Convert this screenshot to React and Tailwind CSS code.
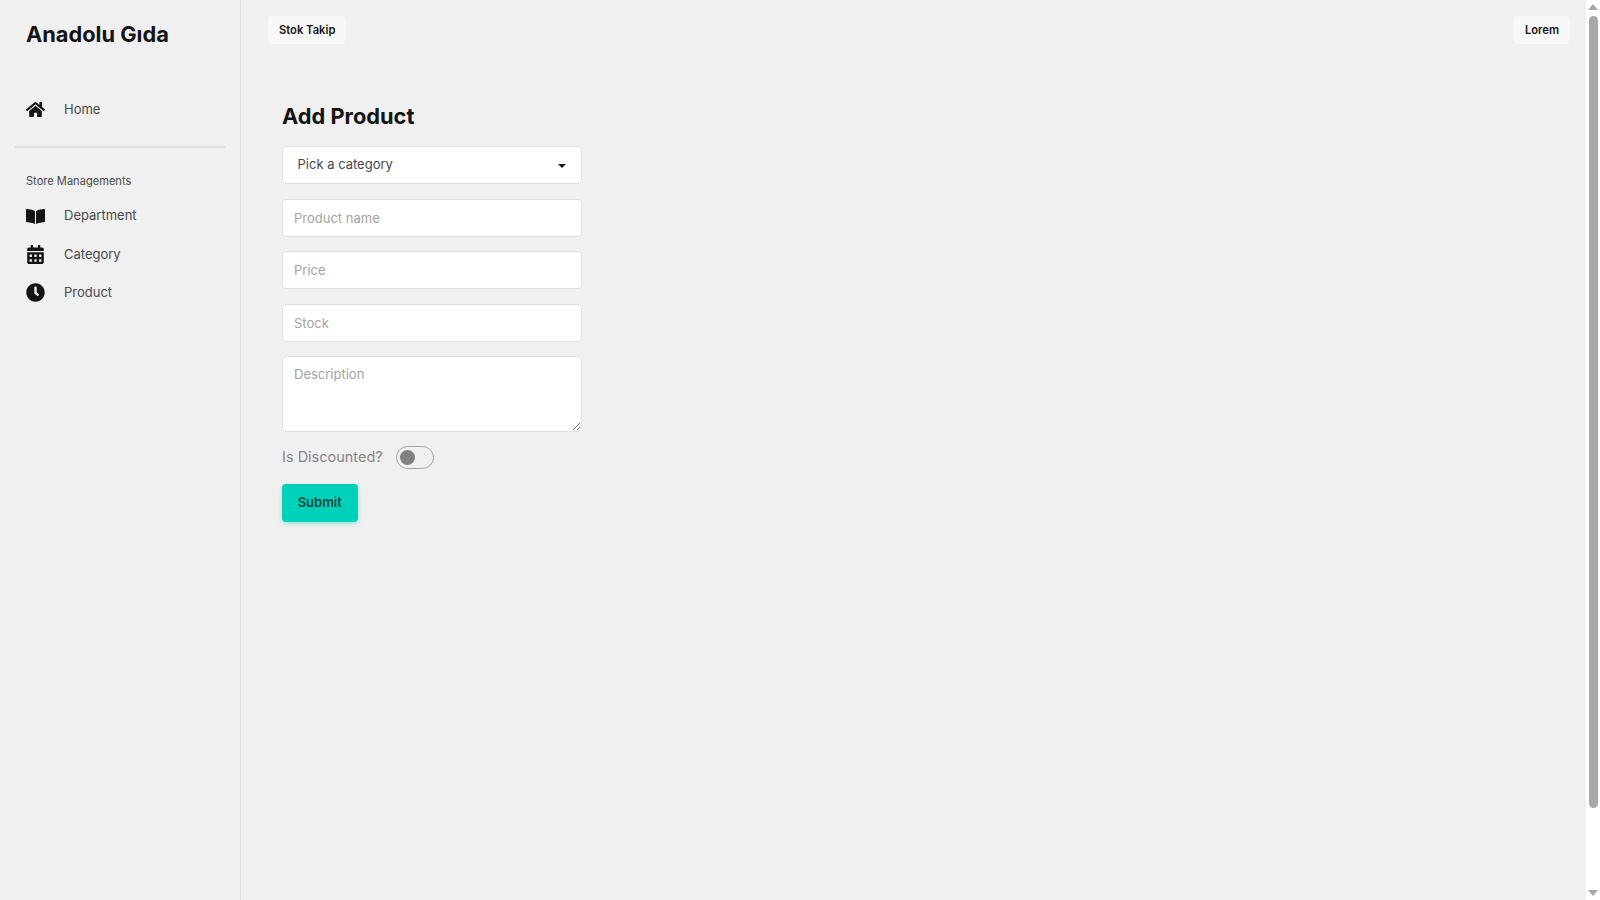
import React from 'react';
import { FaHome, FaBookOpen, FaCalendarAlt, FaClock } from 'react-icons/fa';

function NavItem({ icon: Icon, label, size = 19 }) {
  return (
    <a className="flex h-[38.25px] items-center text-[13px] text-[#484848]">
      <span className="flex w-[38px] justify-start">
        <Icon size={size} className="text-[#141414]" />
      </span>
      {label}
    </a>
  );
}

function Field({ placeholder }) {
  return (
    <input
      type="text"
      placeholder={placeholder}
      className="h-[38px] w-full rounded-[4px] border border-[#e0e0e0] bg-white px-[11px] text-[13px] text-[#333] outline-none placeholder:text-[#a3a3a3]"
    />
  );
}

export default function App() {
  return (
    <div className="flex h-screen w-full overflow-hidden bg-[#f0f0f0] font-['Inter',sans-serif]">
      <aside className="w-[241px] shrink-0 border-r border-[#dcdee4]">
        <div className="px-[26px] pt-[19px] text-[21.8px] leading-[30px] font-bold text-[#141414]">Anadolu Gıda</div>
        <div className="mt-[41.5px] px-[26px]">
          <NavItem icon={FaHome} label="Home" />
        </div>
        <div className="mx-[15px] mt-[17.25px] h-[2px] bg-[#e0e0e0]"></div>
        <div className="mt-[25px] px-[26px] text-[11.1px] leading-[16px] text-[#484848]">Store Managements</div>
        <div className="mt-[8px] px-[26px]">
          <NavItem icon={FaBookOpen} label="Department" />
          <NavItem icon={FaCalendarAlt} label="Category" />
          <NavItem icon={FaClock} label="Product" />
        </div>
      </aside>

      <main className="min-w-0 flex-1">
        <div className="flex items-start justify-between pt-4 pr-4 pl-[27px]">
          <div className="flex h-[28px] items-center rounded-[4px] bg-[#f8f8f8] px-[11px] text-[11.2px] font-semibold text-[#141414]">Stok Takip</div>
          <div className="flex h-[28px] items-center rounded-[4px] bg-[#f8f8f8] px-[11px] text-[11.2px] font-semibold text-[#141414]">Lorem</div>
        </div>

        <form className="mt-[56px] ml-[41px] w-[300px]">
          <h1 className="text-[21.8px] leading-[32px] font-bold text-[#141414]">Add Product</h1>

          <div className="mt-[14px] flex h-[38px] items-center justify-between rounded-[4px] border border-[#e0e0e0] bg-white pr-[15px] pb-px pl-[14.5px] text-[13px] text-[#484848]">
            <span>Pick a category</span>
            <svg width="8" height="4" viewBox="0 0 8 4" className="mt-[3px]">
              <path d="M0 0h8L4 4z" fill="#141414" />
            </svg>
          </div>

          <div className="mt-[14.5px] flex flex-col gap-[14.5px]">
            <Field placeholder="Product name" />
            <Field placeholder="Price" />
            <Field placeholder="Stock" />
            <textarea
              placeholder="Description"
              className="block h-[76px] w-full rounded-[4px] border border-[#e0e0e0] bg-white px-[11px] py-[7px] text-[13px] leading-[20px] outline-none placeholder:text-[#a3a3a3]"
            />
          </div>

          <div className="mt-[13px] flex h-[24px] items-center">
            <span className="text-[14.5px] text-[#858585]">Is Discounted?</span>
            <span className="ml-[13px] flex h-[23px] w-[38px] items-center rounded-full border border-[#a3a3a3] pl-[3px]">
              <span className="h-[15px] w-[15px] rounded-full bg-[#808080]"></span>
            </span>
          </div>

          <button type="button" className="mt-[15px] block h-[38px] w-[75.5px] rounded-[4px] bg-[#00d1b8] text-[13px] font-semibold text-[#0d4a43] shadow-[0_2px_4px_rgba(0,209,184,0.35)]">
            Submit
          </button>
        </form>
      </main>

      <div className="flex w-[14px] shrink-0 flex-col items-center bg-white">
        <svg width="10" height="6" viewBox="0 0 10 6" className="mt-[4px]">
          <path d="M0 6L5 0l5 6z" fill="#a8a8a8" />
        </svg>
        <div className="mt-[6px] h-[792px] w-[9px] rounded-full bg-[#a8a8a8]"></div>
        <svg width="10" height="6" viewBox="0 0 10 6" className="mt-auto mb-[4px]">
          <path d="M0 0h10L5 6z" fill="#a8a8a8" />
        </svg>
      </div>
    </div>
  );
}
